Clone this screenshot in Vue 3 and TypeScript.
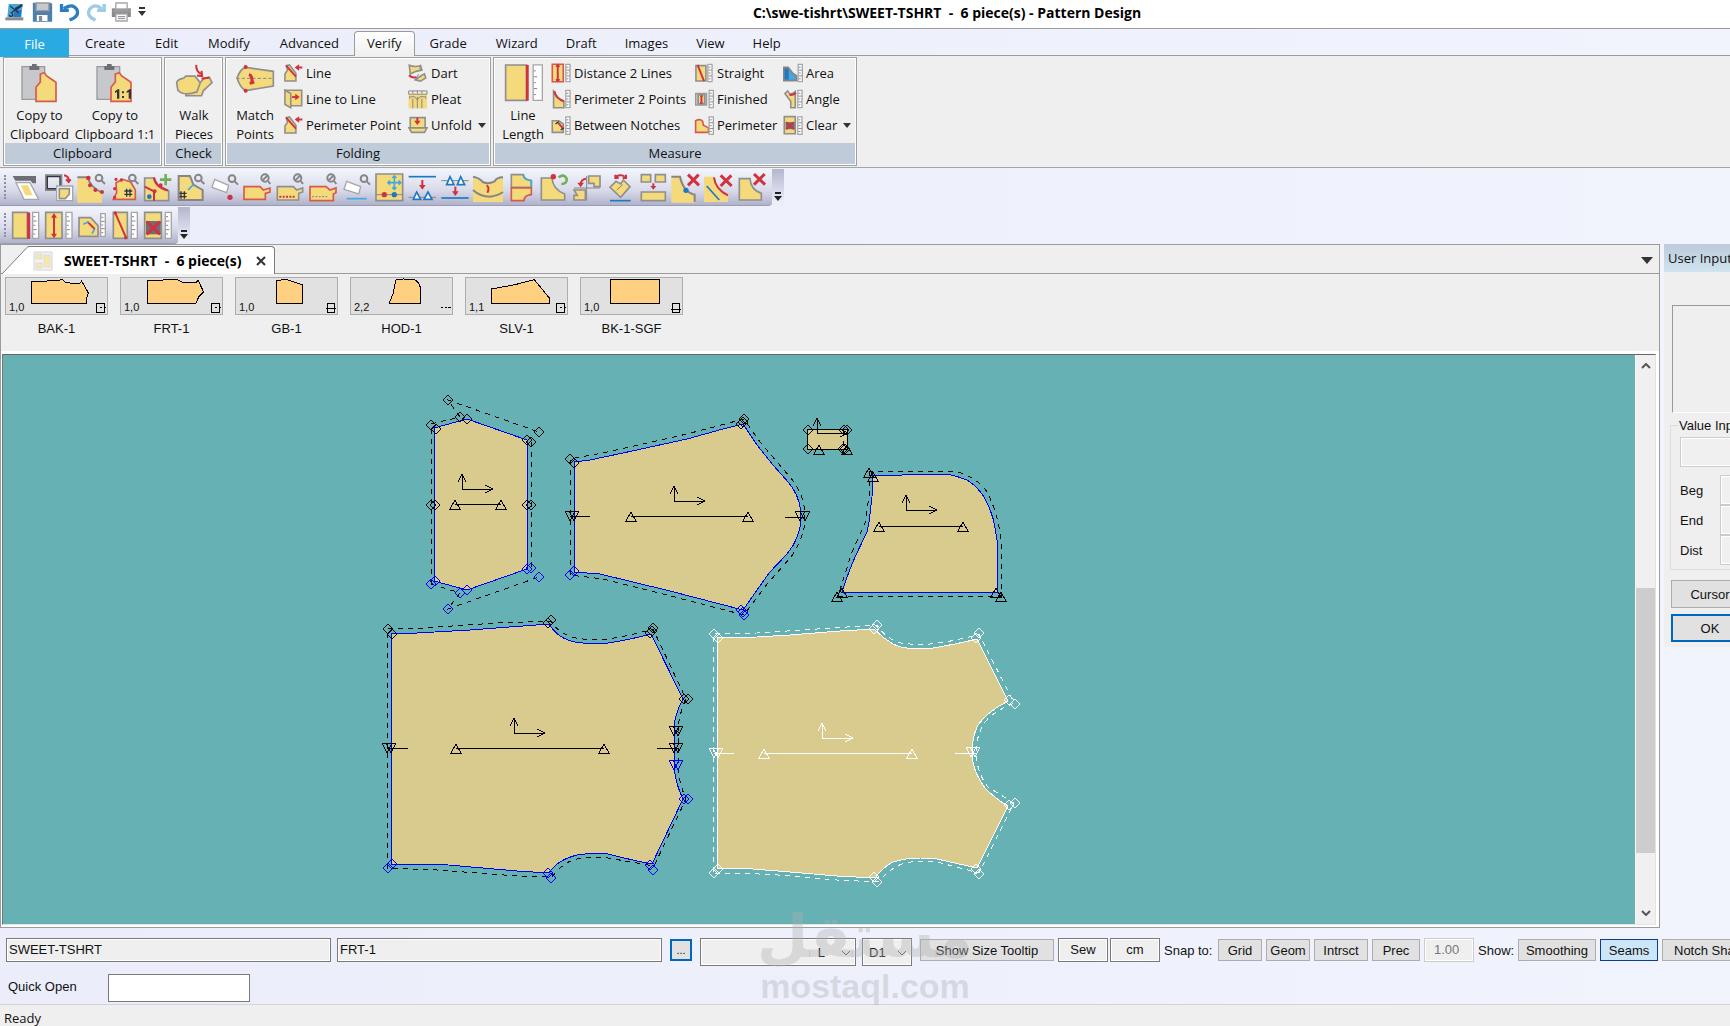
<script setup lang="ts">
import { h, ref } from 'vue'

type Part = [style: string, d: string]
interface Glyph { box: string; w: number; h: number; parts: Part[] }

const YELLOW = '#f5da7c'
const GRAY = '#868688'
const RED = '#d0323f'
const BLUE = '#1f78c1'

/* style key -> fill, stroke, stroke width */
const paint: Record<string, [string, string, number]> = {
  yg: [YELLOW, '#8f8f8f', 5],
  yr: [YELLOW, '#d65a4c', 5],
  y: [YELLOW, 'none', 0],
  g: ['none', GRAY, 6],
  g3: ['none', GRAY, 3],
  gf: ['#8a8a8e', 'none', 0],
  lg: ['#c6c8cc', '#9a9a9c', 4],
  dk: ['#6e6e74', 'none', 0],
  k: ['none', '#33353c', 4],
  kf: ['#33353c', 'none', 0],
  r: ['none', RED, 6],
  r8: ['none', RED, 9],
  rf: [RED, 'none', 0],
  b: ['none', BLUE, 5],
  bf: [BLUE, 'none', 0],
  lb: ['none', '#3fa9e0', 5],
  lbf: ['#3fa9e0', 'none', 0],
  wb: ['#ffffff', BLUE, 5],
  w: ['#ffffff', '#a6a6aa', 4],
  wf: ['#ffffff', 'none', 0],
  gn: ['none', '#72b05a', 8],
  sv: ['#4d80ad', 'none', 0],
  u: ['none', '#2a7fc0', 10],
  ul: ['none', '#9ccbe6', 10],
}

const dot = (x: number, y: number, r: number) =>
  `M${x - r} ${y}a${r} ${r} 0 1 0 ${2 * r} 0a${r} ${r} 0 1 0 ${-2 * r} 0Z`
const lens = (x: number, y: number): Part[] => [
  ['g', dot(x, y, 10)], ['g', `M${x + 8} ${y + 8}L${x + 18} ${y + 18}`],
]
const noLens = (x: number, y: number): Part[] => [
  ['g', dot(x, y, 11)], ['g', `M${x + 8} ${y - 8}L${x - 8} ${y + 8}M${x + 9} ${y + 9}L${x + 16} ${y + 18}`],
]
const rule = (x: number, y: number, w: number, hh: number): Part[] => [
  ['w', `M${x} ${y}h${w}v${hh}h${-w}Z`],
  ['g3', [1, 2, 3, 4, 5].map(i => `M${x + 2} ${Math.round(y + (hh * i) / 6)}h${i % 2 ? 6 : 10}`).join('')],
]
const cross = (x: number, y: number): Part => ['r8', `M${x - 16} ${y - 16}L${x + 17} ${y + 16}M${x + 16} ${y - 16}L${x - 16} ${y + 16}`]

const Icon = (p: { g: Glyph }) =>
  h('svg', { viewBox: p.g.box, width: p.g.w, height: p.g.h, 'aria-hidden': 'true' },
    p.g.parts.map(([s, d]) => h('path', { d, fill: paint[s][0], stroke: paint[s][1], 'stroke-width': paint[s][2] })))
Icon.props = ['g']

/* quick access strip */
const quick: { label: string; g: Glyph }[] = [
  { label: 'Application', g: { box: '12 6 60 60', w: 20, h: 20, parts: [['lbf', 'M26 12h42l-4 40H22Z'], ['bf', 'M44 30h20l-2 22H40Z'], ['gf', 'M16 52h54v9H16Z'], ['k', 'M30 18L56 38M66 14L32 40M28 44a5 5 0 1 0 8-4'], ['kf', 'M44 24l22-12 2 6-20 14Z']] } },
  { label: 'Save', g: { box: '98 6 62 60', w: 21, h: 20, parts: [['sv', 'M100 8h54l4 4v53h-58Z'], ['lg', 'M110 9h38v23h-38Z'], ['wf', 'M112 45h32v18h-32Z'], ['gf', 'M118 48h10v15h-10Z']] } },
  { label: 'Undo', g: { box: '176 6 62 60', w: 21, h: 20, parts: [['u', 'M190 26Q215 8 229 28Q238 50 207 60'], ['u', 'M183 12v19h22']] } },
  { label: 'Redo', g: { box: '254 6 62 60', w: 21, h: 20, parts: [['ul', 'M300 26Q280 8 264 28Q254 50 282 60'], ['ul', 'M308 12v19h-21']] } },
  { label: 'Print', g: { box: '332 6 62 60', w: 21, h: 20, parts: [['gf', 'M334 25h57v26h-57Z'], ['w', 'M346 9h34v18h-34Z'], ['w', 'M346 42h34v21h-34Z'], ['g3', 'M352 50h22M352 56h22'], ['lg', 'M340 31h46v4h-46Z']] } },
]

const tabs = ['Create', 'Edit', 'Modify', 'Advanced', 'Verify', 'Grade', 'Wizard', 'Draft', 'Images', 'View', 'Help']
const activeTab = ref('Verify')

const shirt = 'M121 222L133 218L140 228L158 240L168 247V304H108V262L121 246Z'
const bigCopy: Glyph = { box: '60 186 120 126', w: 40, h: 42, parts: [['lg', 'M66 200H134V298H66Z'], ['dk', 'M88 198h8v-6h14v6h8v12H88Z'], ['yr', shirt]] }
const bigCopy1: Glyph = { box: '60 186 120 126', w: 40, h: 42, parts: [['lg', 'M66 200H134V298H66Z'], ['dk', 'M88 198h8v-6h14v6h8v12H88Z'], ['yr', shirt], ['kf', 'M120 274l8-6h5v28h-7v-20l-6 3ZM155 274l8-6h5v28h-7v-20l-6 3ZM141 274h6v6h-6ZM141 288h6v6h-6Z']] }
const walk: Glyph = { box: '520 194 122 126', w: 40, h: 42, parts: [['yg', 'M556 292L600 255L612 243L628 240L636 256L610 280L604 296H556Z'], ['yg', 'M528 256Q530 246 550 242L556 236H584L600 256L590 284Q550 298 532 280Z'], ['r', 'M588 202Q586 220 602 230M590 234L606 236L604 220M604 244L628 240']] }
const match: Glyph = { box: '706 198 120 126', w: 40, h: 42, parts: [['yg', 'M712 246Q722 218 738 214L821 226V270L738 284Q722 276 712 246Z'], ['g3', 'M712 247h8m6 0h10m6 0h10m6 0h10m6 0h10m6 0h10m6 0h10'], ['r8', 'M748 235Q760 240 756 262M750 262L764 258'], ['rf', dot(738, 213, 6) + dot(738, 284, 6)]] }
const lineLen: Glyph = { box: '36 186 122 126', w: 40, h: 42, parts: [['yg', 'M44 194H108V302H44Z'], ['r8', 'M110 194V303'], ...rule(128, 194, 28, 108)] }

const foldPt = (y: number): Part[] => [['yg', `M854 ${y + 52}V${y + 30}L862 ${y + 18}L858 ${y + 4}L868 ${y + 2}L888 ${y + 28}L888 ${y + 52}Z`], ['r', `M858 ${y + 4}L888 ${y + 38}M890 ${y + 10}H908`], ['rf', `M884 ${y + 10}L898 ${y}V${y + 20}Z`]]
const sm = (box: string, parts: Part[]): Glyph => ({ box, w: 20, h: 20, parts })
const folding = [
  [
    { t: 'Line', g: sm('848 188 62 62', foldPt(192)) },
    { t: 'Line to Line', g: sm('848 266 62 62', [['yg', 'M854 270H906V318H872Z'], ['yg', 'M854 270L872 280V324L854 314Z'], ['r', 'M876 291H890'], ['rf', 'M886 281L900 291L886 301Z']]) },
    { t: 'Perimeter Point', g: sm('848 344 62 62', foldPt(348)) },
  ],
  [
    { t: 'Dart', g: sm('1223 188 62 62', [['yg', 'M1227 195Q1245 202 1262 196L1266 210L1248 214L1230 222Z'], ['yg', 'M1246 240L1266 226L1274 222L1278 234L1262 244Z'], ['r', 'M1226 226Q1236 236 1250 232'], ['g3', 'M1262 196Q1256 210 1266 210M1256 222L1246 240']]) },
    { t: 'Pleat', g: sm('1223 266 62 62', [['y', 'M1225 282H1282V326H1225Z'], ['g3', 'M1225 272H1282V282H1225ZM1238 272v8M1252 272v8M1266 272v8M1238 296v30M1252 290v36M1266 296v30M1228 296v-6h16l8 10 8-10h18v6']]) },
    { t: 'Unfold', caret: true, g: sm('1223 344 62 62', [['yg', 'M1230 352H1276V384H1230Z'], ['yg', 'M1226 384H1282L1274 398H1234Z'], ['r', 'M1252 352V366'], ['rf', 'M1242 362L1252 375L1262 362Z']]) },
  ],
]
const rl = (x: number, y: number) => rule(x, y, 13, 54)
const measure = [
  [
    { t: 'Distance 2 Lines', g: sm('182 188 62 62', [['yr', 'M186 192H220V246H186Z'], ['r', 'M203 196V242M198 200L203 194L208 200M198 238L203 244L208 238'], ...rl(228, 192)]) },
    { t: 'Perimeter 2 Points', g: sm('182 266 62 62', [['yg', 'M190 324V274L200 292L222 304V324Z'], ['r', 'M192 272Q198 296 222 304'], ...rl(228, 270)]) },
    { t: 'Between Notches', g: sm('182 344 62 62', [['yg', 'M186 362H206L220 372V398H186Z'], ['k', 'M196 372L206 364M212 390L222 384'], ['r', 'M204 368L218 384'], ...rl(228, 350)]) },
  ],
  [
    { t: 'Straight', g: sm('611 188 62 62', [['yg', 'M617 196H648V244H617Z'], ['r', 'M622 194L642 244'], ...rl(654, 192)]) },
    { t: 'Finished', g: sm('611 266 62 62', [['lg', 'M616 280H650V316H616Z'], ['yg', 'M624 284H644V312H624Z'], ['r', 'M634 286V310M630 288h8M630 309h8'], ...rl(658, 270)]) },
    { t: 'Perimeter', g: sm('611 344 62 62', [['yr', 'M616 398V362Q630 354 638 364L640 376L656 384V398Z'], ...rl(658, 350)]) },
  ],
  [
    { t: 'Area', g: sm('878 188 62 62', [['lbf', 'M894 202L908 220L920 230V242H894Z'], ['bf', 'M880 202H896V242H880Z'], ['g', 'M880 202H894L908 220L920 228V242H880Z'], ...rl(925, 192)]) },
    { t: 'Angle', g: sm('878 266 62 62', [['yg', 'M884 280L892 272L900 282Q910 280 916 274V324H902V304Z'], ['r', 'M898 284Q912 286 918 278'], ...rl(924, 270)]) },
    { t: 'Clear', caret: true, g: sm('878 344 62 62', [['yg', 'M882 349H916V402H882Z'], ['dk', 'M886 366h28v22h-28Z'], ['r', 'M888 366L912 388M912 366L888 388'], ...rl(924, 350)]) },
  ],
]

/* main tool strip: the icons share one sheet, one 99-unit cell each */
const sheet: Part[][] = [
  [['dk', 'M38 34H108V56H98L92 48H46Z'], ['w', 'M48 54H90L116 104H72Z'], ['y', 'M62 62H84L98 92H76Z']],
  [['g', 'M138 32H184V76H138Z'], ['k', 'M142 36H180V72H142Z'], ['w', 'M170 64H218V108H170Z'], ['yg', 'M178 72H208V88L196 102H178Z'], ['r', 'M192 32Q206 34 206 48M198 44L206 52L212 44']],
  [['y', 'M232 40H264L276 64L306 86V114H232Z'], ['g', 'M232 38H264Q268 66 306 84'], ['rf', dot(265, 40, 7) + dot(270, 62, 6) + dot(286, 76, 6) + dot(306, 82, 6)], ...lens(297, 40)],
  [['yr', 'M348 54L368 44L392 52L406 76V104H340L350 84Z'], ['rf', dot(348, 44, 5) + dot(344, 72, 5) + dot(364, 46, 5) + dot(344, 98, 5)], ['k', 'M380 72V96M390 72V96M373 79H397M373 89H397'], ...lens(397, 40)],
  [['yg', 'M434 40H462L474 62L506 78V108H434Z'], ['r', 'M462 38Q464 66 504 78M434 66L462 80V108'], ['rf', dot(482, 62, 6) + dot(464, 80, 6)], ['bf', dot(448, 96, 7)], ['gn', 'M497 28V62M480 45H514']],
  [['y', 'M536 34H570L580 58L608 78V106H536Z'], ['g', 'M536 106V34H570L580 60L608 76V106Z'], ['lb', 'M564 76L580 60'], ['k', 'M543 80V102M553 80V102M538 86H560M538 96H560'], ...lens(595, 40)],
  [['w', 'M644 44L686 62L680 84L636 68Z'], ['rf', dot(690, 98, 8)], ...lens(696, 42)],
  [['yr', 'M732 66H780L790 76L810 70V82L796 86V104H732Z'], ...noLens(795, 40)],
  [['yg', 'M832 66H880L890 76L908 70V82L896 86V106H832Z'], ['r', 'M838 96h6m4 0h6m4 0h6m4 0h6m4 0h6'], ...noLens(893, 40)],
  [['yr', 'M930 66H978L990 76L1008 70V84L1000 88V108H930Z'], ['g3', 'M936 96h6m4 0h6m4 0h6m4 0h6m4 0h6'], ...noLens(993, 40)],
  [['w', 'M1040 50L1082 66L1076 88L1032 74Z'], ['lb', 'M1040 102H1100'], ...lens(1092, 42)],
  [['yg', 'M1128 28H1208V108H1128Z'], ['lb', 'M1183 36V72M1165 54H1201M1177 40l6-6 6 6M1177 68l6 6 6-6M1170 48l-6 6 6 6M1196 48l6 6-6 6'], ['g3', 'M1130 90H1208'], ['rf', dot(1153, 90, 8)], ['bf', dot(1183, 90, 8)]],
  [['b', 'M1226 36H1308'], ['r', 'M1267 46V64'], ['rf', 'M1257 61L1267 75L1277 61Z'], ['g3', 'M1226 98H1308'], ['wb', 'M1240 104L1250 82L1262 104ZM1272 104L1284 82L1296 104Z']],
  [['g3', 'M1324 48H1406'], ['wb', 'M1340 60L1350 36L1362 60ZM1372 60L1382 36L1394 60Z'], ['r', 'M1366 66V84'], ['rf', 'M1356 80L1366 94L1376 80Z'], ['b', 'M1324 100H1406']],
  [['y', 'M1419 36Q1464 66 1509 36V112H1419Z'], ['g', 'M1419 36Q1440 40 1448 52Q1464 60 1484 50Q1490 38 1509 38M1419 76Q1440 96 1470 96Q1496 92 1509 82'], ['r', 'M1460 62Q1470 70 1462 84']],
  [['yg', 'M1534 30H1570Q1570 44 1594 48V68H1534Z'], ['yr', 'M1534 70H1594V90Q1572 92 1572 108H1534Z'], ['lb', 'M1570 30Q1570 44 1594 48V66']],
  [['yg', 'M1624 40H1656Q1658 74 1694 88V106H1624Z'], ['rf', dot(1660, 36, 8)], ['gn', 'M1676 38Q1692 26 1700 42Q1702 58 1684 58']],
  [['yg', 'M1766 34H1800V66H1782V56H1766Z'], ['yg', 'M1722 76H1756V106H1722V92H1732Z'], ['g3', 'M1760 34V108M1722 70H1800'], ['r', 'M1742 60Q1742 44 1758 42'], ['rf', 'M1732 54L1742 68L1752 54Z']],
  [['yg', 'M1830 68L1848 50L1862 58L1870 46L1890 66L1862 98Z'], ['r', 'M1848 36Q1864 28 1874 36M1846 30v10h10M1878 30v10h-10'], ['g3', 'M1850 76L1868 60'], ['b', 'M1830 108H1892']],
  [['yg', 'M1924 30H1952V52H1924ZM1966 30H1996V52H1966Z'], ['r', 'M1960 56V66'], ['rf', 'M1951 64L1960 75L1969 64Z'], ['yg', 'M1924 82H1996V108H1924Z']],
  [['y', 'M2014 36H2044L2056 74L2086 92V114H2014Z'], ['g', 'M2014 36H2040Q2050 82 2084 90V112'], ['bf', dot(2058, 77, 8)], cross(2080, 46)],
  [['y', 'M2112 36H2142L2156 72L2184 88V112H2112Z'], ['r', 'M2142 38Q2146 74 2184 92'], ['b', 'M2120 64L2158 106'], cross(2178, 48)],
  [['yg', 'M2218 42H2250Q2252 76 2284 86V106H2218Z'], cross(2278, 44)],
]
const stripOne: Glyph[] = sheet.map((parts, i) => ({ box: `${27 + 99 * i} 19 99 99`, w: 33, h: 33, parts }))
const stripTwo: Glyph[] = ([
  [['yg', 'M38 140H82V218H38Z'], ['r8', 'M86 140V220'], ...rule(98, 140, 18, 78)],
  [['yg', 'M137 140H186V218H137Z'], ['r', 'M162 148V212'], ['rf', 'M153 156L162 142L171 156ZM153 204L162 218L171 204Z'], ...rule(198, 140, 18, 78)],
  [['yg', 'M237 156H272L294 180V212H237Z'], ['r', 'M262 168L284 190'], ['lb', 'M250 176L266 168M276 204L284 190'], ...rule(302, 144, 14, 68)],
  [['yg', 'M340 140H382V218H340Z'], ['r', 'M345 140L378 216'], ['rf', dot(346, 142, 5) + dot(377, 216, 5)], ...rule(394, 140, 18, 78)],
  [['yg', 'M434 140H484V218H434Z'], ['dk', 'M438 166h44v40h-44Z'], ['r8', 'M440 168L480 206M480 168L440 206'], ...rule(496, 140, 18, 78)],
] as Part[][]).map((parts, i) => ({ box: `${27 + 99 * i} 130 99 99`, w: 33, h: 33, parts }))

/* piece shelf */
const shelf = [
  { name: 'BAK-1', qty: '1,0', mark: 'tick', d: 'M79 12H125L132 9H165L171 6L180 15L195 18H225L230 12L250 48L245 63V78H79Z' },
  { name: 'FRT-1', qty: '1,0', mark: 'tick', d: 'M82 9H130L137 6H170L185 15H230L234 9L251 45L237 58L228 78H82Z' },
  { name: 'GB-1', qty: '1,0', mark: 'wide', d: 'M124 12L150 6L203 24V78H124Z' },
  { name: 'HOD-1', qty: '2,2', mark: 'dots', d: 'M118 78L130 48L137 9L160 6L192 8Q212 15 212 43V78Z' },
  { name: 'SLV-1', qty: '1,1', mark: 'tick', d: 'M79 36L150 23L208 8L253 63V78H79Z' },
  { name: 'BK-1-SGF', qty: '1,0', mark: 'line', d: 'M91 6H239V78H91Z' },
]
const marks: Record<string, string> = {
  tick: 'M275 80H299V106H275ZM272 92H275M284 92H290M299 92H302',
  wide: 'M276 80H299V106H276ZM272 94H304',
  dots: 'M272 92H279M284 92H290M295 92H302',
  line: 'M276 80H299V106H276ZM272 97H302',
}

/* drawing: each piece has its own origin; its points are in thirds of a pixel */
type P = [number, number]
interface Piece {
  x: number; y: number; line: string; text: string
  outline: string; seam?: string
  axis: P; grain?: [number, number, number]; bars?: [number, number, number][]
  dia: P[]; diaAlt?: P[]; up?: P[]; down?: P[]; downAlt?: P[]
}
const pieces: Piece[] = [
  {
    x: 370, y: 380, line: '#0000f0', text: '#000',
    outline: 'M193 145 L290 118 L470 181 L470 567 L290 630 L193 603 Z',
    seam: 'M182 612 L182 133 L270 110 L234 60 L507 157 M482 185 L482 564 M182 612 L270 638 L234 687 L507 591',
    axis: [277, 328], grain: [254, 392, 373],
    dia: [[182, 134], [197, 146], [234, 60], [270, 110], [291, 117], [507, 156], [470, 180], [483, 186], [182, 375], [195, 375], [471, 375], [483, 375]],
    diaAlt: [[182, 612], [196, 602], [269, 639], [234, 687], [291, 629], [507, 591], [470, 567], [483, 564]],
  },
  {
    x: 370, y: 380, line: '#0000f0', text: '#000',
    outline: 'M611 247 L660 241 L760 220 L950 177 L1060 146 L1118 133 L1160 196 L1210 255 L1258 310 Q1293 355 1293 410 Q1293 470 1250 522 L1198 580 L1118 689 L900 633 L690 583 L611 575 Z',
    seam: 'M600 585 L600 237 L700 220 L950 163 L1122 117 L1170 187 L1260 290 Q1304 345 1304 410 Q1304 470 1264 530 L1195 610 L1122 704 L880 643 L700 598 L600 586',
    axis: [913, 364], grain: [782, 1133, 409], bars: [[600, 660, 409], [1245, 1302, 412]],
    dia: [[600, 237], [612, 249], [1122, 117], [1114, 131], [1118, 126]],
    diaAlt: [[600, 585], [612, 573], [1122, 704], [1114, 690], [1118, 695]],
    down: [[599, 408], [612, 408], [1291, 408], [1304, 408]],
  },
  {
    x: 790, y: 400, line: '#000', text: '#000',
    outline: 'M52 88 L170 88 L170 146 L52 146 Z', seam: 'M158 92 L158 146', axis: [82, 100],
    dia: [[54, 90], [163, 90], [171, 90], [54, 147], [158, 147], [165, 147]], up: [[87, 148], [172, 148]],
  },
  {
    x: 790, y: 400, line: '#0000f0', text: '#000',
    outline: 'M248 226 L336 225 L345 223 L470 223 Q500 227 530 240 Q560 258 583 290 Q610 340 615 385 L620 420 L622 575 L155 575 Q175 520 195 470 L230 395 L238 365 L246 290 Z',
    seam: 'M236 212 L236 290 L225 370 L185 455 L145 587 L634 587 L634 430 Q628 345 592 275 Q560 232 500 215 L460 212 L236 212',
    axis: [347, 331], grain: [266, 518, 377], dia: [],
    up: [[236, 216], [249, 229], [140, 589], [156, 577], [619, 577], [632, 589]],
  },
  {
    x: 370, y: 610, line: '#0000f0', text: '#000',
    outline: 'M64 71 L140 70 L300 60 L537 43 Q570 95 640 100 L715 100 Q790 88 843 72 L939 266 Q911 315 911 360 L911 475 Q918 525 939 568 L846 763 Q810 755 715 733 Q655 728 620 734 Q560 750 537 789 L440 783 L200 763 L64 762 Z',
    seam: 'M52 773 L52 56 L160 54 L380 40 L540 32 Q580 85 640 88 L715 88 Q790 75 849 57 L949 266 Q923 320 923 365 L923 475 Q928 520 949 566 L852 768 L715 745 Q655 741 622 747 Q580 757 545 802 L440 797 L200 779 L52 773',
    axis: [433, 370], grain: [257, 702, 415], bars: [[52, 114, 415], [861, 923, 415]],
    dia: [[54, 57], [66, 71], [543, 31], [535, 40], [849, 55], [840, 70], [846, 62], [942, 267], [954, 267]],
    diaAlt: [[54, 773], [66, 761], [535, 788], [543, 804], [840, 764], [849, 780], [942, 567], [954, 567]],
    down: [[51, 415], [64, 415], [911, 363], [923, 363], [911, 415], [923, 415]], downAlt: [[911, 466], [923, 466]],
  },
  {
    x: 690, y: 610, line: '#fff', text: '#fff',
    outline: 'M82 83 L200 82 L300 75 L450 62 L553 58 Q580 85 610 103 Q635 115 650 115 L730 115 Q800 103 862 88 L955 272 Q890 305 865 345 Q845 380 845 430 Q845 480 885 535 Q920 570 955 587 L862 773 L740 747 Q665 737 610 755 Q580 770 555 803 L440 797 L265 783 L150 775 L82 775 Z',
    seam: 'M70 787 L70 71 L200 70 L380 56 L560 46 Q600 102 660 103 L720 103 Q800 92 867 72 L972 280 Q900 310 880 345 Q857 385 857 430 Q860 490 895 530 L972 578 L867 790 L740 757 Q670 748 620 768 Q590 785 565 815 L440 811 L265 795 L150 790 L70 790',
    axis: [397, 385], grain: [221, 666, 430], bars: [[71, 132, 430], [795, 857, 430]],
    dia: [[72, 71], [84, 84], [561, 45], [553, 57], [867, 69], [859, 84], [958, 271], [975, 282], [958, 584], [975, 579], [72, 789], [84, 776], [553, 802], [561, 816], [859, 776], [867, 792]],
    down: [[71, 429], [83, 429], [842, 427], [855, 427]],
  },
]
/* page position of the drawing surface inside the window */
const ORIGIN = { x: 3, y: 355 }
const px = (p: Piece, x: number) => Math.round(x / 3) + p.x - ORIGIN.x
const py = (p: Piece, y: number) => Math.round(y / 3) + p.y - ORIGIN.y
const place = (p: Piece, d: string) => d.replace(/(\d+) (\d+)/g, (_, x, y) => `${px(p, +x)} ${py(p, +y)}`)
const each = (p: Piece, pts: P[] | undefined, shape: string) =>
  (pts ?? []).map(([x, y]) => `M${px(p, x)} ${py(p, y)}${shape}`).join('')
const DIAMOND = 'm0 -5l5 5l-5 5l-5 -5Z'
const UP = 'm0 -4l5 9h-10Z'
const DOWN = 'm0 5l-5 -10h10Z'
const details = (p: Piece) => {
  const [ax, ay] = [px(p, p.axis[0]), py(p, p.axis[1])]
  let d = `M${ax} ${ay}v-15m-4 8l4 -8l4 8M${ax} ${ay}h31m-8 -4l8 4l-8 4`
  if (p.grain) {
    const [a, b, y] = p.grain
    d += `M${px(p, a)} ${py(p, y)}H${px(p, b)}` + each(p, [[a, y], [b, y]], UP)
  }
  for (const [a, b, y] of p.bars ?? []) d += `M${px(p, a)} ${py(p, y)}H${px(p, b)}`
  return d + each(p, p.dia, DIAMOND) + each(p, p.up, UP) + each(p, p.down, DOWN)
}
const alt = (p: Piece) => each(p, p.diaAlt, DIAMOND) + each(p, p.downAlt, DOWN)
</script>

<template>
  <div class="app">
    <header class="titlebar">
      <div class="quick">
        <button v-for="q in quick" :key="q.label" :aria-label="q.label"><Icon :g="q.g" /></button>
        <button aria-label="Customize"><svg width="8" height="10" viewBox="0 0 8 10"><path d="M1 0H7V2H1ZM0 4H8L4 9Z" fill="#333" /></svg></button>
      </div>
      <h1>C:\swe-tishrt\SWEET-TSHRT&nbsp; -&nbsp; 6 piece(s) - Pattern Design</h1>
    </header>

    <nav class="tabs">
      <button class="file">File</button>
      <button v-for="t in tabs" :key="t" class="tab" :class="{ on: t === activeTab }" @click="activeTab = t">{{ t }}</button>
    </nav>

    <section class="ribbon">
      <div class="group clip">
        <div class="tools">
          <button class="big copy"><Icon :g="bigCopy" /><span>Copy to<br>Clipboard</span></button>
          <button class="big copy"><Icon :g="bigCopy1" /><span>Copy to<br>Clipboard 1:1</span></button>
        </div>
        <h2>Clipboard</h2>
      </div>
      <div class="group check">
        <div class="tools"><button class="big"><Icon :g="walk" /><span>Walk<br>Pieces</span></button></div>
        <h2>Check</h2>
      </div>
      <div class="group folding">
        <div class="tools">
          <button class="big"><Icon :g="match" /><span>Match<br>Points</span></button>
          <div v-for="(col, i) in folding" :key="i" class="col">
            <button v-for="c in col" :key="c.t" class="small"><Icon :g="c.g" />{{ c.t }}<i v-if="'caret' in c" class="caret" /></button>
          </div>
        </div>
        <h2>Folding</h2>
      </div>
      <div class="group measure">
        <div class="tools">
          <button class="big"><Icon :g="lineLen" /><span>Line<br>Length</span></button>
          <div v-for="(col, i) in measure" :key="i" class="col">
            <button v-for="c in col" :key="c.t" class="small"><Icon :g="c.g" />{{ c.t }}<i v-if="'caret' in c" class="caret" /></button>
          </div>
        </div>
        <h2>Measure</h2>
      </div>
    </section>

    <section class="strips">
      <div class="strip">
        <div class="bar"><i class="grip" /><button v-for="(g, i) in stripOne" :key="i" :aria-label="`Tool ${i + 1}`"><Icon :g="g" /></button></div>
        <button class="more" aria-label="More tools"><svg width="8" height="10" viewBox="0 0 8 10"><path d="M1 0H7V2H1ZM0 4H8L4 9Z" fill="#222" /></svg></button>
      </div>
      <div class="strip">
        <div class="bar"><i class="grip" /><button v-for="(g, i) in stripTwo" :key="i" :aria-label="`Measure tool ${i + 1}`"><Icon :g="g" /></button></div>
        <button class="more" aria-label="More tools"><svg width="8" height="10" viewBox="0 0 8 10"><path d="M1 0H7V2H1ZM0 4H8L4 9Z" fill="#222" /></svg></button>
      </div>
    </section>

    <main class="work">
      <section class="doc">
        <div class="doctabs">
          <svg class="slant" width="27" height="28" viewBox="0 0 27 28"><path d="M0 28L25 1.5Q26 .5 27 .5V28Z" fill="#fff" /><path d="M0 28L25 1.5Q26 .5 27 .5" fill="none" stroke="#7b7b7b" /></svg>
          <div class="doctab">
            <svg width="20" height="20" viewBox="0 0 20 20"><path d="M1 1H19V19H1Z" fill="#f2f2f2" stroke="#d4d4d4" /><path d="M3 3H9V8H3ZM11 4H17V16H11ZM3 12H9V17H3Z" fill="#f5e8a8" stroke="#ddd" /></svg>
            <strong>SWEET-TSHRT&nbsp; -&nbsp; 6 piece(s)</strong>
            <button aria-label="Close"><svg width="10" height="10" viewBox="0 0 10 10"><path d="M1 1L9 9M9 1L1 9" stroke="#333" stroke-width="2" /></svg></button>
          </div>
          <button class="list" aria-label="Documents"><svg width="12" height="7" viewBox="0 0 12 7"><path d="M0 0H12L6 7Z" fill="#333" /></svg></button>
        </div>
        <div class="shelf">
          <figure v-for="s in shelf" :key="s.name">
            <button :aria-label="s.name">
              <svg viewBox="3 3 303 108" width="101" height="36"><path :d="s.d" fill="#ffcf82" /><g fill="none" stroke="#000" stroke-width="3" shape-rendering="crispEdges"><path :d="s.d" /><path :d="marks[s.mark]" /></g></svg>
              <span>{{ s.qty }}</span>
            </button>
            <figcaption>{{ s.name }}</figcaption>
          </figure>
        </div>
        <div class="view">
          <div class="surface">
            <svg width="100%" height="100%" shape-rendering="crispEdges" role="img" aria-label="Pattern pieces">
              <g v-for="(p, i) in pieces" :key="i" fill="none">
                <path :d="place(p, p.outline)" fill="#d9cb8e" :stroke="p.line" />
                <path v-if="p.seam" :d="place(p, p.seam)" :stroke="p.text" stroke-dasharray="5 5" />
                <path :d="details(p)" :stroke="p.text" />
                <path :d="alt(p)" stroke="#0000f0" />
              </g>
            </svg>
          </div>
          <div class="scroll">
            <svg width="10" height="6" viewBox="0 0 10 6"><path d="M1 5L5 1L9 5" fill="none" stroke="#555" stroke-width="2" /></svg>
            <div class="track"><div class="thumb" /></div>
            <svg width="10" height="6" viewBox="0 0 10 6"><path d="M1 1L5 5L9 1" fill="none" stroke="#555" stroke-width="2" /></svg>
          </div>
        </div>
      </section>

      <aside class="panel">
        <h2>User Input</h2>
        <form @submit.prevent>
          <div class="message" />
          <fieldset>
            <legend>Value Input</legend>
            <input class="wide" aria-label="Value" disabled>
            <label for="beg">Beg</label><input id="beg" disabled>
            <label for="end">End</label><input id="end" disabled>
            <label for="dist">Dist</label><input id="dist" disabled>
          </fieldset>
          <button type="button">Cursor</button>
          <button class="ok">OK</button>
        </form>
      </aside>
    </main>

    <footer class="bottom">
      <div class="controls">
        <div class="pair"><input class="name" value="SWEET-TSHRT" aria-label="Style" readonly><input class="name" value="FRT-1" aria-label="Piece" readonly></div>
        <button class="dots">...</button>
        <div class="pair top">
          <span class="select size"><select aria-label="Size"><option>L</option></select><svg width="10" height="6" viewBox="0 0 10 6"><path d="M1 1L5 5L9 1" fill="none" stroke="#555" /></svg></span>
          <span class="select"><select aria-label="Dimension"><option>D1</option></select><svg width="10" height="6" viewBox="0 0 10 6"><path d="M1 1L5 5L9 1" fill="none" stroke="#555" /></svg></span>
        </div>
        <div class="cluster">
          <button class="w134">Show Size Tooltip</button>
          <div class="units"><input value="Sew" aria-label="Line type" readonly><input value="cm" aria-label="Unit" readonly></div>
          <span class="w50">Snap to:</span>
          <button class="w44">Grid</button>
          <button class="w44">Geom</button>
          <button class="w54">Intrsct</button>
          <button class="w48">Prec</button>
          <input class="prec" value="1.00" aria-label="Precision" disabled>
          <span class="w36">Show:</span>
          <button class="w78">Smoothing</button>
          <button class="w58 on">Seams</button>
          <button class="w134 notch">Notch Shape</button>
        </div>
      </div>
      <div class="open"><label for="quick-open">Quick Open</label><input id="quick-open"></div>
      <div class="watermark" aria-hidden="true"><b lang="ar">مستقل</b><span>mostaql.com</span></div>
    </footer>
    <div class="status">Ready</div>
  </div>
</template>

<style>
html, body { margin: 0; background: #edeffc; overflow: hidden; }
</style>

<style scoped>
* { box-sizing: border-box; }
.app { display: flex; flex-direction: column; height: 100vh; overflow: hidden; color: #111; background: linear-gradient(90deg, #ebedfa, #f1f4fd); font: 13px/19px "Open Sans", "Noto Sans", sans-serif; }
button, input, select { font: inherit; color: inherit; margin: 0; padding: 0; border: 0; border-radius: 0; background: none; outline: 0; }
svg { display: block; flex: none; }
h1, h2, figure { margin: 0; font: inherit; }

.titlebar { flex: none; height: 28px; display: flex; align-items: center; background: #fff; padding-bottom: 4px; }
.quick { flex: none; width: 164px; padding-left: 4px; display: flex; align-items: center; gap: 6px; }
.quick button:first-child { margin-right: 2px; }
.quick button:nth-child(4) { margin-right: -2px; }
.titlebar h1 { flex: 1; text-align: center; font-size: 14px; font-weight: 700; color: #000; white-space: nowrap; }

.tabs { position: relative; flex: none; height: 28px; display: flex; align-items: stretch; border-top: 1px solid #9b9b9b; border-bottom: 1px solid #9b9b9b; }
.file { width: 69px; margin-bottom: -2px; padding-top: 2px; background: #29abe2; color: #fff; position: relative; }
.tab { padding: 2px 14px 0; border: 1px solid transparent; }
.tab:nth-child(2) { margin-left: 1px; }
.tab:nth-child(n + 8) { padding: 2px 13px 0; }
.tab.on { margin: 2px 0 -1px; padding: 0 12px 1px; border: 1px solid #9b9b9b; border-bottom: 0; border-radius: 4px 4px 0 0; background: linear-gradient(#fff, #efefef); position: relative; }

.ribbon { flex: none; display: flex; gap: 2px; padding: 1px 0 1px 3px; background: #efefef; border-bottom: 1px solid #a5a5a5; }
.group { height: 109px; display: flex; flex-direction: column; border: 1px solid #a0a0a0; box-shadow: inset 0 0 0 1px #fff; padding: 1px; }
.group.clip { width: 159px; }
.group.check { width: 59px; }
.group.folding { width: 266px; }
.group.measure { width: 364px; }
.group h2 { flex: none; height: 21px; line-height: 21px; text-align: center; background: #bfcbd9; }
.tools { flex: 1; min-height: 0; display: flex; align-items: flex-start; }
.big { flex: none; width: 56px; height: 84px; display: flex; flex-direction: column; align-items: center; justify-content: flex-start; padding-top: 3px; white-space: nowrap; }
.big span { line-height: 19px; margin-top: 2px; }
.copy { width: 69px; }
.copy + .copy { width: 82px; }
.col { flex: none; display: flex; flex-direction: column; padding-top: 1px; }
.small { height: 26px; display: flex; align-items: center; gap: 3px; white-space: nowrap; }
.folding .col { width: 125px; }
.folding .col:last-child { width: 80px; }
.measure .big { width: 56px; }
.measure .col { width: 143px; }
.measure .col:nth-child(3) { width: 89px; }
.measure .col:nth-child(4) { width: 72px; }
.caret { border: 4px solid transparent; border-top: 5px solid #333; border-bottom: 0; margin-left: 3px; }

.strips { flex: none; display: flex; flex-direction: column; align-items: flex-start; }
.strip { display: flex; height: 38px; padding-top: 1px; }
.bar { display: flex; align-items: center; background: linear-gradient(#f3f5fc, #d8daea 60%, #b0b2ca); border-bottom: 1px solid #9a9cb4; border-radius: 0 4px 4px 0; padding-right: 4px; }
.bar button { flex: none; width: 33px; height: 33px; }
.grip { width: 9px; height: 24px; border-left: 2px dotted #8c8ea0; margin-right: -4px; margin-left: 4px; }
.more { width: 12px; display: flex; justify-content: center; align-items: flex-end; padding-bottom: 4px; background: linear-gradient(#b4b6ce, #eceefa 90%); }

.work { flex: 1; min-height: 0; display: flex; gap: 4px; }
.doc { flex: 1; min-width: 0; display: flex; flex-direction: column; border: 1px solid #9b9b9b; background: #fff; }
.doctabs { flex: none; height: 29px; display: flex; align-items: flex-end; background: #efefef; border-bottom: 1px solid #9b9b9b; }
.slant { margin: 0 -1px -1px 1px; position: relative; }
.doctab { height: 28px; margin-bottom: -1px; display: flex; align-items: center; background: #fff; border: solid #7b7b7b; border-width: 1px 1px 0 0; border-radius: 0 4px 0 0; padding: 0 8px 0 5px; white-space: nowrap; }
.doctab strong { margin: 0 15px 0 11px; color: #000; font-size: 14px; }
.list { margin-left: auto; padding: 0 6px 9px; }
.shelf { flex: none; display: flex; gap: 12px; padding: 3px 4px 0; height: 77px; background: #efefef; font-family: "Liberation Sans", Arial, sans-serif; }
.shelf figure { width: 103px; text-align: center; }
.shelf button { display: block; position: relative; width: 103px; height: 38px; background: #e1e1e1; border: 1px solid #adadad; }
.shelf button span { position: absolute; left: 3px; bottom: 1px; font-size: 11px; line-height: 12px; }
.shelf figcaption { line-height: 28px; }
.view { flex: 1; min-height: 0; margin: 3px 3px 2px 1px; border: 1px solid #666; border-color: #666 #e3e3e3 #e3e3e3 #777; display: flex; }
.surface { flex: 1; min-width: 0; background: #65b1b4; }
.scroll { width: 20px; display: flex; flex-direction: column; align-items: center; padding: 8px 0; background: #f0f0f0; border-left: 1px solid #fff; }
.track { flex: 1; align-self: stretch; padding: 0; display: flex; flex-direction: column; justify-content: flex-end; }
.thumb { height: 49%; margin-bottom: 57px; background: #cdcdcd; }

.panel { width: 66px; flex: none; overflow: hidden; white-space: nowrap; }
.panel h2 { height: 28px; line-height: 28px; padding-left: 4px; background: linear-gradient(#bccad9, #d0e4f0); }
.panel form { width: 130px; padding: 33px 0 5px 7px; background: #efefef; font-family: "Liberation Sans", Arial, sans-serif; }
.message { height: 108px; border: 1px solid #999; border-bottom-color: #fff; margin-left: 1px; }
fieldset { margin: 3px 0 0 -1px; padding: 2px 9px 4px; border: 1px solid #dcdcdc; display: grid; grid-template-columns: 40px 1fr; align-items: center; min-width: 0; }
legend { padding: 0 1px; margin-left: -2px; }
fieldset input { height: 30px; min-width: 0; width: 100%; border: 1px solid #ccc; box-shadow: inset 0 0 0 1px #fff; background: #f0f0f0; }
fieldset .wide { grid-column: 1 / 3; margin-bottom: 8px; }
.panel button { display: block; width: 78px; height: 28px; margin-top: 10px; background: #e1e1e1; border: 1px solid #adadad; }
.panel .ok { margin-top: 6px; border: 2px solid #0067c0; }

.bottom { position: relative; flex: none; height: 76px; padding: 10px 0 0 6px; font-family: "Liberation Sans", Arial, sans-serif; white-space: nowrap; }
.controls { display: flex; align-items: center; gap: 8px; height: 24px; }
.controls > *, .cluster > * { flex: none; }
.pair { display: flex; gap: 6px; }
.top { align-self: flex-start; }
.controls input { width: 50px; height: 24px; border: 1px solid #7a7a7a; box-shadow: inset 0 0 0 1px #fff; background: #efefef; text-align: center; padding-bottom: 2px; }
.controls .name { width: 325px; padding-left: 2px; text-align: left; }
.controls button { height: 22px; background: #e1e1e1; border: 1px solid #adadad; }
.controls .dots { width: 22px; border: 2px solid #0067c0; line-height: 14px; font-size: 11px; }
.select { position: relative; width: 50px; height: 28px; }
.select select { width: 100%; height: 100%; appearance: none; border: 1px solid #7a7a7a; box-shadow: inset 0 0 0 1px #fff; background: #efefef; padding-left: 6px; }
.select svg { position: absolute; right: 5px; top: 12px; }
.select.size { width: 156px; }
.size select { text-align-last: right; padding-right: 30px; }
.cluster { display: flex; align-items: center; gap: 4px; }
.units { display: flex; gap: 2px; }
.cluster .w134 { width: 134px; }
.w50 { width: 50px; }
.w44 { width: 44px; }
.w54 { width: 54px; }
.w48 { width: 48px; }
.w36 { width: 36px; }
.w78 { width: 78px; }
.w58 { width: 58px; }
.cluster .on { background: #cde6f7; border-color: #0a3f8c; }
.cluster .notch { text-align: left; padding-left: 11px; }
.cluster .prec { border-color: #ccc; color: #777; text-align: left; padding-left: 9px; }
.open { display: flex; align-items: center; margin-top: 12px; padding-left: 2px; }
.open label { width: 100px; padding-bottom: 4px; }
.open input { width: 142px; height: 28px; border: 1px solid #7a7a7a; background: #fff; }
.watermark { position: absolute; left: 760px; bottom: 0; width: 210px; color: rgba(176, 176, 180, .38); pointer-events: none; display: flex; flex-direction: column; align-items: center; font-weight: 700; }
.watermark b { font: 700 59px/62px "DejaVu Sans", sans-serif; }
.watermark span { font-size: 34px; line-height: 36px; }
.status { flex: none; height: 22px; padding: 4px 4px 0; background: #efefef; border-top: 1px solid #d5d5d5; line-height: 18px; }
</style>
